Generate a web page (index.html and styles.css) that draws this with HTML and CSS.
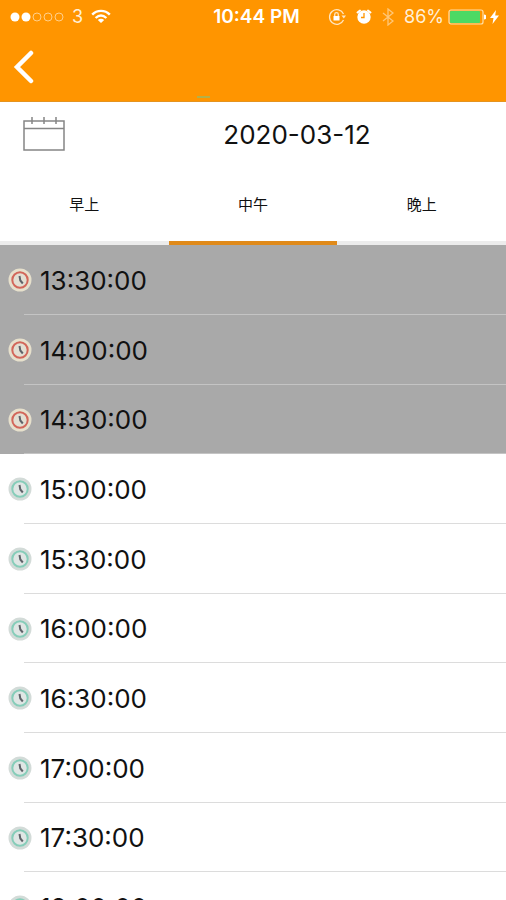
FILE: index.html
```html
<!DOCTYPE html>
<html lang="zh-Hans">
<head>
  <meta charset="UTF-8">
  <meta name="viewport" content="width=device-width, initial-scale=1.0">
  <title>2020-03-12</title>
  <link rel="stylesheet" href="styles.css">
</head>
<body>
  <!-- Shared clock icon -->
  <svg class="sprite" aria-hidden="true">
    <symbol id="clock" viewBox="0 0 24 24">
      <circle class="clock-outer" cx="12" cy="12" r="11.500"/>
      <circle class="clock-ring" cx="12" cy="12" r="7.700"/>
      <path class="clock-hands" d="M11.500 8l.8 4.500 2.500 3"/>
    </symbol>
  </svg>

  <header class="header">
    <!-- Status Bar -->
    <div class="status-bar">
      <div class="status-left">
        <svg width="54" height="12" viewBox="0 0 54 12">
          <g fill="#fff">
            <circle cx="5" cy="6" r="4.500"/>
            <circle cx="16" cy="6" r="4.500"/>
          </g>
          <g fill="none" stroke="#ffcf8a">
            <circle cx="27" cy="6" r="4"/>
            <circle cx="38" cy="6" r="4"/>
            <circle cx="49" cy="6" r="4"/>
          </g>
        </svg>
        <span class="carrier">3</span>
        <svg width="20" height="15" viewBox="0 0 20 15" fill="none" stroke="#fff" stroke-width="2.400">
          <path d="M1.200 5.600C6 .6 14 .6 18.800 5.600"/>
          <path d="M4.600 9C8 5.800 12 5.800 15.400 9"/>
          <path d="M10 14L6.800 11C8.600 9.300 11.400 9.300 13.200 11Z" fill="#fff" stroke="none"/>
        </svg>
      </div>
      <span class="status-time">10:44 PM</span>
      <div class="status-right">
        <svg width="18" height="18" viewBox="0 0 18 18" fill="none" stroke="#ffe6c2" stroke-width="1.300">
          <path d="M15.500 6A7.300 7.300 0 1 0 15.500 12"/>
          <path d="M13.500 7.500h4.500l-2.200 3z" fill="#ffe6c2" stroke="none"/>
          <rect x="5.500" y="8" width="6" height="4.500" fill="#fff" stroke="none"/>
          <path d="M6.700 8V6.500a1.800 1.800 0 0 1 3.600 0V8"/>
        </svg>
        <svg class="alarm" width="16" height="17" viewBox="0 0 16 17">
          <circle cx="8" cy="9" r="6.700" fill="#fff"/>
          <path d="M1.500 4.500L4 2.500M14.500 4.500L12 2.500" stroke="#fff" stroke-width="2" stroke-linecap="round"/>
          <path d="M8 5v4.500H5" fill="none" stroke="#ff9500" stroke-width="1.300"/>
        </svg>
        <svg class="bluetooth" width="12" height="18" viewBox="0 0 12 18" fill="none" stroke="#ffc778" stroke-width="1.300">
          <path d="M1 5l10 8-5 4V1l5 4-10 8"/>
        </svg>
        <span class="percent">86%</span>
        <svg width="38" height="16" viewBox="0 0 38 16">
          <rect x="1" y="1" width="34" height="14" rx="2" fill="none" stroke="#ffe0a8" stroke-width="1.200"/>
          <rect x="2" y="2" width="30" height="12" rx="1" fill="#4cd964"/>
          <path d="M36 5.500a2.500 2.500 0 0 1 0 5z" fill="#fff"/>
        </svg>
        <svg width="9" height="14" viewBox="0 0 9 14">
          <path d="M6 0L0 8h3.500L2.500 14 9 5.500H5.200z" fill="#fff"/>
        </svg>
      </div>
    </div>

    <!-- Nav Bar -->
    <nav class="nav-bar">
      <button type="button" class="back-btn" aria-label="返回">
        <svg width="22" height="34" viewBox="0 0 22 34" fill="none" stroke="#fff" stroke-width="4.500" stroke-linecap="round">
          <path d="M18 3L4 17 18 31"/>
        </svg>
      </button>
      <span class="nav-mark"></span>
    </nav>
  </header>

  <!-- Date -->
  <div class="date-row">
    <button type="button" class="calendar-btn" aria-label="日历">
      <svg width="42" height="36" viewBox="0 0 42 36" fill="none" stroke="#858585" stroke-width="1.500">
        <path d="M1 5h40v29H1zM1 12.500h40"/>
        <path d="M9 1v7M21 1v7M33 1v7"/>
      </svg>
    </button>
    <time class="date" datetime="2020-03-12">2020-03-12</time>
  </div>

  <!-- Tabs -->
  <div class="tabs" role="tablist">
    <button type="button" class="tab" role="tab" aria-selected="false">早上</button>
    <button type="button" class="tab active" role="tab" aria-selected="true">中午</button>
    <button type="button" class="tab" role="tab" aria-selected="false">晚上</button>
  </div>

  <!-- Time Slots -->
  <ul class="slots">
    <li><button type="button" class="slot" disabled><svg class="clock"><use href="#clock"/></svg><span>13:30:00</span></button></li>
    <li><button type="button" class="slot" disabled><svg class="clock"><use href="#clock"/></svg><span>14:00:00</span></button></li>
    <li><button type="button" class="slot" disabled><svg class="clock"><use href="#clock"/></svg><span>14:30:00</span></button></li>
    <li><button type="button" class="slot"><svg class="clock"><use href="#clock"/></svg><span>15:00:00</span></button></li>
    <li><button type="button" class="slot"><svg class="clock"><use href="#clock"/></svg><span>15:30:00</span></button></li>
    <li><button type="button" class="slot"><svg class="clock"><use href="#clock"/></svg><span>16:00:00</span></button></li>
    <li><button type="button" class="slot"><svg class="clock"><use href="#clock"/></svg><span>16:30:00</span></button></li>
    <li><button type="button" class="slot"><svg class="clock"><use href="#clock"/></svg><span>17:00:00</span></button></li>
    <li><button type="button" class="slot"><svg class="clock"><use href="#clock"/></svg><span>17:30:00</span></button></li>
    <li><button type="button" class="slot"><svg class="clock"><use href="#clock"/></svg><span>18:00:00</span></button></li>
  </ul>
</body>
</html>
```
FILE: styles.css
```css
/* Global Styles */
* {
  box-sizing: border-box;
}

body {
  margin: 0;
  height: 100vh;
  display: flex;
  flex-direction: column;
  overflow: hidden;
  background-color: #fff;
  color: #111;
  font-family: Inter, "Noto Sans CJK SC", sans-serif;
}

button {
  padding: 0;
  border: none;
  background: none;
  color: inherit;
  font-family: inherit;
  cursor: pointer;
}

svg {
  display: block;
  flex-shrink: 0;
}

.sprite {
  position: absolute;
  width: 0;
  height: 0;
}

/* Header */
.header {
  flex-shrink: 0;
  background-color: #ff9500;
  border-bottom: 1px solid #e59420;
  color: #fff;
}

.status-bar {
  display: grid;
  grid-template-columns: 1fr auto 1fr;
  align-items: center;
  height: 33px;
  padding: 0 7px 0 10px;
  font-size: 18px;
}

.status-left,
.status-right {
  display: flex;
  align-items: center;
}

.status-left {
  gap: 8px;
}

.status-right {
  justify-content: flex-end;
  gap: 4px;
}

.carrier,
.percent {
  color: #fff0d8;
}

.status-time {
  padding-left: 4px;
  font-size: 19px;
  font-weight: 600;
}

.alarm {
  margin: 0 6px;
}

.bluetooth {
  margin-right: 6px;
}

.nav-bar {
  position: relative;
  display: flex;
  height: 68px;
  padding: 0 13px;
}

.back-btn {
  align-self: center;
}

.nav-mark {
  position: absolute;
  bottom: 3px;
  left: 39%;
  width: 13px;
  height: 2px;
  background-color: #b3b04a;
}

/* Date */
.date-row {
  display: flex;
  align-items: center;
  flex-shrink: 0;
  height: 64px;
  padding-left: 23px;
}

.date {
  flex: 1;
  padding-left: 23px;
  font-size: 26px;
  text-align: center;
}

/* Tabs */
.tabs {
  display: flex;
  flex-shrink: 0;
  height: 79px;
}

.tab {
  flex: 1;
  border-bottom: 4px solid #ececec;
  font-size: 15px;
}

.tab.active {
  border-bottom-color: #e08a1a;
}

/* Time Slots */
.slots {
  flex: 1;
  margin: 0;
  padding: 0;
  list-style: none;
  overflow-y: auto;
  scrollbar-width: none;
}

.slot {
  position: relative;
  display: flex;
  align-items: center;
  gap: 8px;
  width: 100%;
  height: 70px;
  padding: 0 8px;
  font-size: 26px;
  text-align: left;
}

li:nth-child(3n) .slot {
  height: 69px;
}

/* Inset separator */
.slot::after {
  content: "";
  position: absolute;
  right: 0;
  bottom: 0;
  left: 24px;
  height: 1px;
  background-color: #dcdcdc;
}

.slot:disabled {
  background-color: #a9a9a9;
  color: #111;
  cursor: default;
}

.slot:disabled::after {
  background-color: #c4c4c4;
}

/* Clock icon */
.clock {
  --outer: #d3dbd8;
  --face: #dfe6e4;
  --ring: #86cdb9;
  width: 24px;
  height: 24px;
}

.slot:disabled .clock {
  --outer: #e6e0cc;
  --face: #e3dfd2;
  --ring: #d2675a;
}

.clock-outer {
  fill: var(--outer);
}

.clock-ring {
  fill: var(--face);
  stroke: var(--ring);
  stroke-width: 2;
}

.clock-hands {
  fill: none;
  stroke: #5f6268;
  stroke-width: 2;
}
```
